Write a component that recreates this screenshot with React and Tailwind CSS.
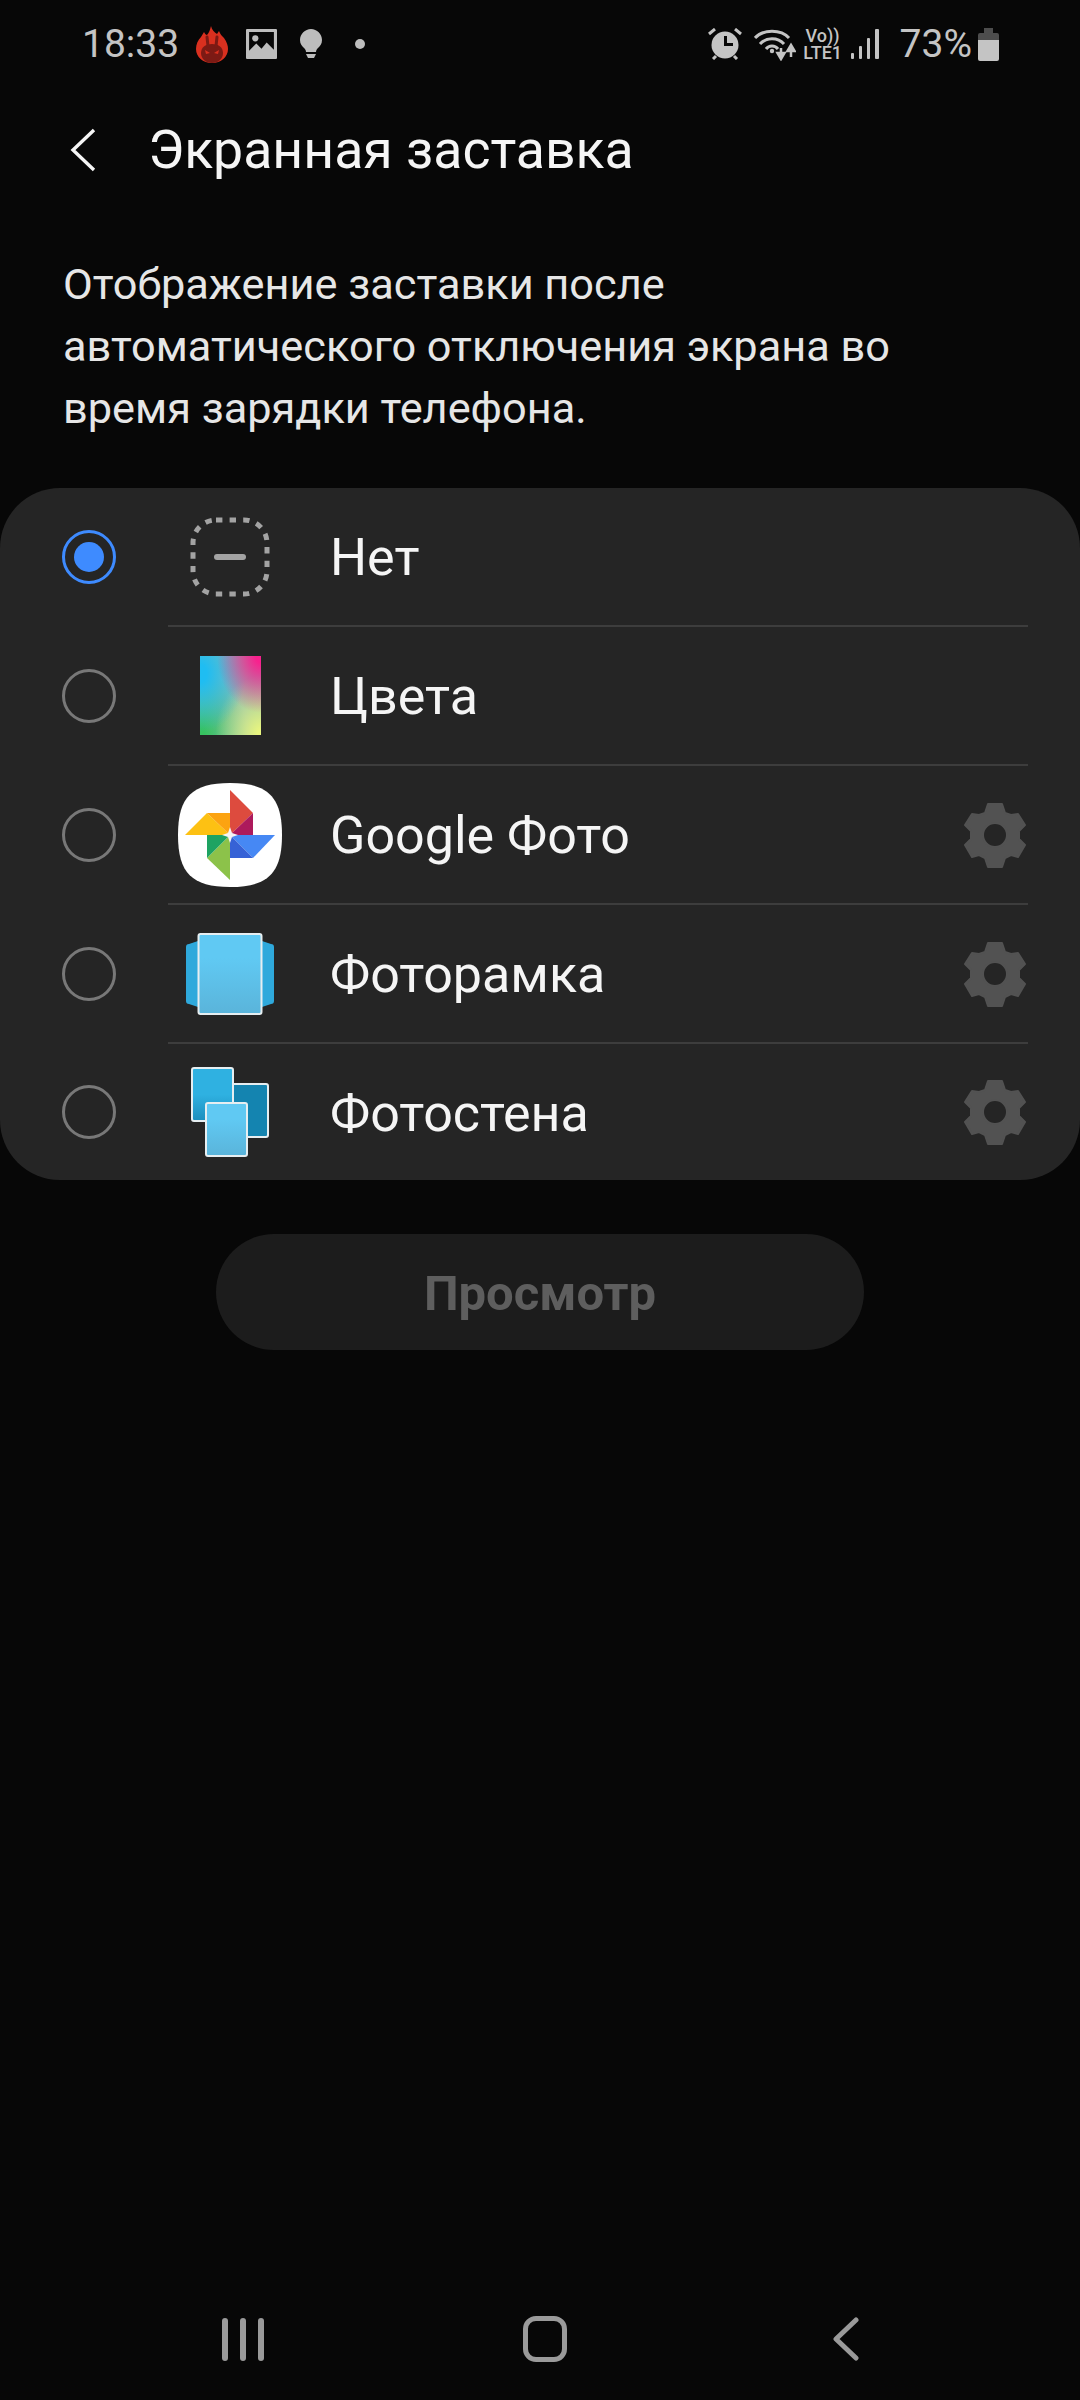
import React from 'react';

const FONT = { fontFamily: 'Roboto, sans-serif' };

// Status bar icons
const FlameIcon = () => (
  <svg width="32" height="37" viewBox="0 0 32 37" className="ml-[17px]">
    <path d="M15 0 C16 4 18 6 21 8 L23 5 C24 8 26 10 28 12 C31 16 32 20 32 23 C32 31 25 37 16 37 C7 37 0 31 0 23 C0 18 2 14 5 11 L8 6 C9 8 10 9 11 9 C13 7 14 4 15 0 Z" fill="#d9301f" />
    <path d="M5 27 C5 21 10 18 16 18 C22 18 27 21 27 27 C27 33 22 37 16 37 C10 37 5 33 5 27 Z" fill="#7c1a14" />
    <path d="M11 11 L12 20 M21 11 L20 20" stroke="#7c1a14" strokeWidth="3" strokeLinecap="round" fill="none" />
    <path d="M9 24 L14 27 L10 28 Z M23 24 L18 27 L22 28 Z" fill="#d9301f" />
  </svg>
);

const ImageIcon = () => (
  <svg width="31" height="30" viewBox="0 0 30 29" className="ml-[18px]">
    <path fillRule="evenodd" d="M1 0 H29 A1 1 0 0 1 30 1 V28 A1 1 0 0 1 29 29 H1 A1 1 0 0 1 0 28 V1 A1 1 0 0 1 1 0 Z M3 3 V21 L10 14 L15 19 L20 13 L27 20 V3 Z" fill="#bdbdbd" />
    <circle cx="9" cy="9" r="3" fill="#bdbdbd" />
  </svg>
);

const BulbIcon = () => (
  <svg width="22" height="30" viewBox="0 0 22 30" className="ml-[23px]">
    <path d="M11 0 C17 0 22 5 22 11 C22 15 20 17 18 19 C17 20 16 21 16 23 H6 C6 21 5 20 4 19 C2 17 0 15 0 11 C0 5 5 0 11 0 Z" fill="#bdbdbd" />
    <path d="M6 25 H16 L14 29 H8 Z" fill="#bdbdbd" />
  </svg>
);

const AlarmIcon = () => (
  <svg width="34" height="32" viewBox="0 0 34 32">
    <circle cx="17" cy="17" r="13.5" fill="#c4c4c4" />
    <path d="M16 8 H19 V15 H25 V18 H16 Z" fill="#070707" />
    <path d="M1 6 L7 1 M33 6 L27 1 M5 31 L8 28 M29 31 L26 28" stroke="#c4c4c4" strokeWidth="3" fill="none" />
  </svg>
);

const WifiIcon = () => (
  <svg width="42" height="33" viewBox="0 0 42 33">
    <path d="M1 10 C9 1 27 1 35 10" stroke="#c4c4c4" strokeWidth="3" fill="none" />
    <path d="M6 16 C12 9 24 9 30 16" stroke="#c4c4c4" strokeWidth="3" fill="none" />
    <path d="M12 21 C15 17 21 17 24 21" stroke="#c4c4c4" strokeWidth="3" fill="none" />
    <circle cx="18" cy="23" r="2.2" fill="#c4c4c4" />
    <path d="M27 20 V28 M23.5 25 L27 31 L30.5 25 Z" stroke="#c4c4c4" strokeWidth="2.5" fill="#c4c4c4" />
    <path d="M37 29 V21 M33.5 23 L37 17 L40.5 23 Z" stroke="#c4c4c4" strokeWidth="2.5" fill="#c4c4c4" />
  </svg>
);

const SignalIcon = () => (
  <svg width="28" height="30" viewBox="0 0 28 30">
    <rect x="0" y="24" width="3" height="6" rx="1" fill="#c4c4c4" />
    <rect x="8" y="17" width="3" height="13" rx="1" fill="#c4c4c4" />
    <rect x="16" y="9" width="3" height="21" rx="1" fill="#c4c4c4" />
    <rect x="24" y="0" width="4" height="30" rx="1" fill="#c4c4c4" />
  </svg>
);

const BatteryIcon = () => (
  <svg width="21" height="33" viewBox="0 0 21 33">
    <path d="M6 0 H15 V5 H19 A2 2 0 0 1 21 7 V12 H0 V7 A2 2 0 0 1 2 5 H6 Z" fill="#4d4d4d" />
    <path d="M0 12 H21 V31 A2 2 0 0 1 19 33 H2 A2 2 0 0 1 0 31 Z" fill="#c4c4c4" />
  </svg>
);

const BackIcon = () => (
  <svg width="26" height="44" viewBox="0 0 26 44">
    <path d="M24 2 L3 22 L24 42" stroke="#f5f5f5" strokeWidth="3.4" fill="none" />
  </svg>
);

// Row icons
const NoneIcon = () => (
  <svg width="80" height="80" viewBox="0 0 80 80">
    <rect x="3" y="3" width="74" height="74" rx="23" fill="none" stroke="#a3a3a3" strokeWidth="5" strokeDasharray="6.4 7.2" />
    <rect x="24" y="37" width="32" height="6" rx="3" fill="#a3a3a3" />
  </svg>
);

const ColorsIcon = () => (
  <svg width="61" height="79" viewBox="0 0 61 79">
    <defs>
      <radialGradient id="c1" cx="0" cy="0.22" r="0.75">
        <stop offset="0.15" stopColor="#1fbdf2" />
        <stop offset="1" stopColor="#1fbdf2" stopOpacity="0" />
      </radialGradient>
      <radialGradient id="c2" cx="1" cy="0" r="0.72">
        <stop offset="0.12" stopColor="#f8218e" />
        <stop offset="1" stopColor="#f8218e" stopOpacity="0" />
      </radialGradient>
      <radialGradient id="c3" cx="0" cy="1" r="0.78">
        <stop offset="0.1" stopColor="#37c25f" />
        <stop offset="1" stopColor="#37c25f" stopOpacity="0" />
      </radialGradient>
      <radialGradient id="c4" cx="1" cy="1" r="0.75">
        <stop offset="0.08" stopColor="#e8f57f" />
        <stop offset="1" stopColor="#e8f57f" stopOpacity="0" />
      </radialGradient>
    </defs>
    <rect width="61" height="79" fill="#88bcb4" />
    <rect width="61" height="79" fill="url(#c3)" />
    <rect width="61" height="79" fill="url(#c4)" />
    <rect width="61" height="79" fill="url(#c1)" />
    <rect width="61" height="79" fill="url(#c2)" />
  </svg>
);

const PhotosIcon = () => (
  <svg width="104" height="104" viewBox="-52 -52 104 104">
    <path d="M0 -52 C38 -52 52 -38 52 0 C52 38 38 52 0 52 C-38 52 -52 38 -52 0 C-52 -38 -38 -52 0 -52 Z" fill="#ffffff" />
    <path d="M0 -45 L23 -22 L0 0 Z" fill="#dd4b3e" />
    <path d="M23 -22 L23 0 L0 0 Z" fill="#ad1a5c" />
    <path d="M-45 0 L-23 -22 L0 0 Z" fill="#fdc113" />
    <path d="M-23 -22 L0 -22 L0 0 Z" fill="#fca311" />
    <path d="M45 0 L23 23 L0 0 Z" fill="#4688f4" />
    <path d="M0 0 L23 23 L0 23 Z" fill="#3662d6" />
    <path d="M0 45 L-23 23 L0 0 Z" fill="#8cc24a" />
    <path d="M-23 23 L-23 0 L0 0 Z" fill="#1ea362" />
    <path d="M0 -8 L2 -2 L8 0 L2 2 L0 8 L-2 2 L-8 0 L-2 -2 Z" fill="#f4f4f4" />
  </svg>
);

const FrameIcon = () => (
  <svg width="88" height="82" viewBox="0 0 88 82">
    <defs>
      <linearGradient id="f1" x1="0" y1="0" x2="0" y2="1">
        <stop offset="0.3" stopColor="#60c9f3" />
        <stop offset="1" stopColor="#5ab4da" />
      </linearGradient>
    </defs>
    <path d="M12 8 L3 11 A3 3 0 0 0 0 14 V68 A3 3 0 0 0 3 71 L12 74 Z" fill="#2fa9dc" />
    <path d="M76 8 L85 11 A3 3 0 0 1 88 14 V68 A3 3 0 0 1 85 71 L76 74 Z" fill="#2fa9dc" />
    <rect x="12.5" y="1" width="63" height="80" rx="2" fill="url(#f1)" stroke="#e6eef1" strokeWidth="2" />
  </svg>
);

const WallIcon = () => (
  <svg width="78" height="90" viewBox="0 0 78 90">
    <defs>
      <linearGradient id="w1" x1="0" y1="0" x2="0" y2="1">
        <stop offset="0.5" stopColor="#2fb1e1" />
        <stop offset="1" stopColor="#1c8ebd" />
      </linearGradient>
      <linearGradient id="w2" x1="0" y1="0" x2="0" y2="1">
        <stop offset="0.3" stopColor="#60c9f3" />
        <stop offset="1" stopColor="#5ab4da" />
      </linearGradient>
    </defs>
    <rect x="41" y="17" width="36" height="53" rx="2" fill="#1484b0" stroke="#e6eef1" strokeWidth="2" />
    <rect x="1" y="1" width="41" height="53" rx="2" fill="url(#w1)" stroke="#e6eef1" strokeWidth="2" />
    <rect x="15" y="36" width="41" height="53" rx="2" fill="url(#w2)" stroke="#e6eef1" strokeWidth="2" />
  </svg>
);

const GearIcon = () => (
  <svg width="66" height="68" viewBox="-33 -34 66 68">
    <path
      fillRule="evenodd"
      d="M-7 -31 L7 -31 L10 -22 L16 -20 L23 -21 L30 -10 L24 -4 L24 4 L30 10 L23 22 L16 20 L10 23 L7 32 L-7 32 L-10 23 L-16 20 L-23 22 L-30 10 L-24 4 L-24 -4 L-30 -10 L-23 -21 L-16 -20 L-10 -22 Z M12 0 A12 12 0 1 0 -12 0 A12 12 0 1 0 12 0 Z"
      fill="#525252"
      stroke="#525252"
      strokeWidth="2"
      strokeLinejoin="round"
    />
  </svg>
);

const Radio = ({ checked }) => (
  <div className={`w-[54px] h-[54px] rounded-full border-[3px] flex items-center justify-center ${checked ? 'border-[#3e8bff]' : 'border-[#787878]'}`}>
    {checked && <div className="w-[30px] h-[30px] rounded-full bg-[#3e8bff]" />}
  </div>
);

const options = [
  { label: 'Нет', icon: <NoneIcon />, checked: true },
  { label: 'Цвета', icon: <ColorsIcon /> },
  { label: 'Google Фото', icon: <PhotosIcon />, gear: true },
  { label: 'Фоторамка', icon: <FrameIcon />, gear: true },
  { label: 'Фотостена', icon: <WallIcon />, gear: true, last: true },
];

export default function App() {
  return (
    <div className="w-[1080px] h-[2400px] bg-[#070707] flex flex-col overflow-hidden" style={FONT}>
      {/* status bar */}
      <div className="h-[88px] pl-[82px] pr-[81px] flex items-center justify-between text-[#c4c4c4]">
        <div className="flex items-center">
          <span className="text-[39px] leading-none">18:33</span>
          <FlameIcon />
          <ImageIcon />
          <BulbIcon />
          <div className="ml-[33px] w-[10px] h-[10px] rounded-full bg-[#bdbdbd]" />
        </div>
        <div className="flex items-center">
          <AlarmIcon />
          <div className="ml-[12px]"><WifiIcon /></div>
          <div className="ml-[7px] w-[40px] flex flex-col items-center font-medium text-[18px] leading-[17px]">
            <span>Vo))</span>
            <span>LTE1</span>
          </div>
          <div className="ml-[8px]"><SignalIcon /></div>
          <span className="ml-[21px] text-[39px] leading-none">73%</span>
          <div className="ml-[6px]"><BatteryIcon /></div>
        </div>
      </div>

      {/* header */}
      <div className="h-[124px] pl-[70px] flex items-center">
        <BackIcon />
        <h1 className="ml-[52px] text-[53.6px] font-normal leading-none text-[#f5f5f5]">Экранная заставка</h1>
      </div>

      <p className="mt-[42px] pl-[63px] text-[43.3px] leading-[62px] text-[#e6e6e6]">
        Отображение заставки после
        <br />
        автоматического отключения экрана во
        <br />
        время зарядки телефона.
      </p>

      {/* options card */}
      <div className="mt-[48px] bg-[#252525] rounded-[60px] flex flex-col">
        {options.map((o) => (
          <div key={o.label} className={`flex items-center ${o.last ? 'h-[136px]' : 'h-[139px]'}`}>
            <div className={`w-[168px] pl-[62px] shrink-0 ${o.last ? '' : 'pb-[2px]'}`}>
              <Radio checked={o.checked} />
            </div>
            <div className={`flex-1 h-full mr-[52px] flex items-center ${o.last ? '' : 'border-b-2 border-[#3d3d3d]'}`}>
              <div className="w-[124px] flex justify-center shrink-0">{o.icon}</div>
              <span className={`ml-[38px] flex-1 text-[52px] leading-none text-[#f5f5f5] ${o.last ? 'pt-[4px]' : 'pt-[3px]'}`}>{o.label}</span>
              {o.gear && <GearIcon />}
            </div>
          </div>
        ))}
      </div>

      <div className="mt-[54px] flex justify-center">
        <button className="w-[648px] h-[116px] pt-[3px] rounded-full bg-[#1c1c1c] text-[49px] font-bold text-[#5e5e5e]">Просмотр</button>
      </div>

      {/* nav bar */}
      <div className="mt-auto h-[120px] flex items-start">
        <div className="w-[360px] pt-[38px] pl-[222px] flex gap-[12px]">
          <div className="w-[6px] h-[43px] rounded-full bg-[#9a9a9a]" />
          <div className="w-[6px] h-[43px] rounded-full bg-[#9a9a9a]" />
          <div className="w-[6px] h-[43px] rounded-full bg-[#9a9a9a]" />
        </div>
        <div className="w-[360px] pt-[36px] pl-[9px] flex justify-center">
          <div className="w-[44px] h-[46px] rounded-[13px] border-[5px] border-[#9a9a9a]" />
        </div>
        <div className="w-[360px] pt-[36px] pl-[111px]">
          <svg width="28" height="46" viewBox="0 0 28 46">
            <path d="M25 4 L5 23 L25 42" stroke="#9a9a9a" strokeWidth="5" strokeLinecap="round" strokeLinejoin="round" fill="none" />
          </svg>
        </div>
      </div>
    </div>
  );
}
